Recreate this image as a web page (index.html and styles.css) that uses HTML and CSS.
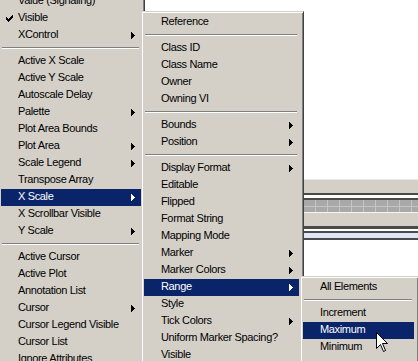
FILE: index.html
```html
<!DOCTYPE html>
<html lang="en">
<head>
    <meta charset="UTF-8">
    <meta name="viewport" content="width=device-width, initial-scale=1.0">
    <title>Property Node Menu</title>
    <link rel="stylesheet" href="styles.css">
</head>
<body>
    <div class="desktop">

        <!-- Pedaço do gráfico atrás dos menus -->
        <div class="scale-strip">
            <div class="strip-face"></div>
            <div class="strip-dark"></div>
            <div class="strip-light"></div>
            <div class="strip-dark"></div>
            <div class="strip-grid"></div>
            <div class="strip-face strip-face-low"></div>
            <div class="strip-dark strip-dark-thick"></div>
            <div class="strip-light strip-light-thin"></div>
            <div class="strip-dark"></div>
            <div class="strip-blue"></div>
            <div class="strip-dark"></div>
        </div>

        <!-- Menu principal -->
        <ul class="menu menu-props">
            <li class="item">Value (Signaling)</li>
            <li class="item checked">
                <svg class="check" width="7" height="7" viewBox="0 0 7 7">
                    <path d="M6 0h1v1h-1z M5 1h2v1h-2z M0 2h1v1h-1z M4 2h3v1h-3z M0 3h2v1h-2z M3 3h3v1h-3z M0 4h5v1h-5z M1 5h3v1h-3z M2 6h1v1h-1z" fill="#000" shape-rendering="crispEdges"/>
                </svg>Visible</li>
            <li class="item sub">XControl</li>
            <li class="sep"></li>
            <li class="item">Active X Scale</li>
            <li class="item">Active Y Scale</li>
            <li class="item">Autoscale Delay</li>
            <li class="item sub">Palette</li>
            <li class="item">Plot Area Bounds</li>
            <li class="item sub">Plot Area</li>
            <li class="item sub">Scale Legend</li>
            <li class="item">Transpose Array</li>
            <li class="item sub active">X Scale</li>
            <li class="item">X Scrollbar Visible</li>
            <li class="item sub">Y Scale</li>
            <li class="sep"></li>
            <li class="item">Active Cursor</li>
            <li class="item">Active Plot</li>
            <li class="item">Annotation List</li>
            <li class="item sub">Cursor</li>
            <li class="item">Cursor Legend Visible</li>
            <li class="item">Cursor List</li>
            <li class="item">Ignore Attributes</li>
        </ul>

        <!-- Submenu X Scale -->
        <ul class="menu menu-scale">
            <li class="item">Reference</li>
            <li class="sep"></li>
            <li class="item">Class ID</li>
            <li class="item">Class Name</li>
            <li class="item">Owner</li>
            <li class="item">Owning VI</li>
            <li class="sep"></li>
            <li class="item sub">Bounds</li>
            <li class="item sub">Position</li>
            <li class="sep"></li>
            <li class="item sub">Display Format</li>
            <li class="item">Editable</li>
            <li class="item">Flipped</li>
            <li class="item">Format String</li>
            <li class="item">Mapping Mode</li>
            <li class="item sub">Marker</li>
            <li class="item sub">Marker Colors</li>
            <li class="item sub active">Range</li>
            <li class="item">Style</li>
            <li class="item sub">Tick Colors</li>
            <li class="item">Uniform Marker Spacing?</li>
            <li class="item">Visible</li>
        </ul>

        <!-- Submenu Range -->
        <ul class="menu menu-range">
            <li class="item">All Elements</li>
            <li class="sep"></li>
            <li class="item">Increment</li>
            <li class="item active">Maximum</li>
            <li class="item">Minimum</li>
        </ul>

        <!-- Ponteiro do mouse -->
        <svg class="pointer" width="13" height="21" viewBox="0 0 13 21">
            <polygon points="0.5,0.5 0.5,16.5 4.5,12.5 7.5,19.5 9.5,18.5 6.5,11.5 11.5,11.5" fill="#fff" stroke="#000" stroke-width="1" stroke-linejoin="miter"/>
        </svg>
    </div>
</body>
</html>
```

FILE: styles.css
```css
body {
    margin: 0;
    background-color: #ffffff;
    font-family: "Liberation Sans", Arial, sans-serif;
    font-size: 11px;
    letter-spacing: -0.35px;
    color: #000000;
}

.desktop {
    position: relative;
    width: 418px;
    height: 361px;
    overflow: hidden;
    background-color: #ffffff;
}

/* Faixa do gráfico (escala / scrollbar) */
.scale-strip {
    margin-left: 303px;
    padding-top: 179px;
}

.strip-face {
    height: 13px;
    background-color: #d4d0c8;
    border-top: 1px solid #ebe9e4;
}

.strip-face-low {
    border-top-color: #f6f5f2;
}

.strip-dark {
    height: 2px;
    background-color: #4a4a4a;
}

.strip-dark-thick {
    height: 3px;
}

.strip-light {
    height: 3px;
    background-color: #ffffff;
}

.strip-light-thin {
    height: 2px;
}

.strip-grid {
    height: 12px;
    background-color: #a9a9a9;
    background-image:
        linear-gradient(90deg, #c6c6c6 1px, transparent 1px),
        linear-gradient(#c6c6c6 1px, transparent 1px);
    background-size: 12px 100%, 100% 6px;
    background-position: 0 0, 0 6px;
    background-repeat: repeat-x, no-repeat;
}

.strip-blue {
    height: 5px;
    background-color: #dde6f6;
}

/* Menus estilo Windows clássico */
.menu {
    position: absolute;
    margin: 0;
    padding: 2px;
    list-style: none;
    box-sizing: border-box;
    background-color: #d4d0c8;
    border: 1px solid;
    border-color: #d4d0c8 #404040 #404040 #d4d0c8;
    box-shadow: inset 1px 1px #ffffff, inset -1px -1px #808080;
}

.menu-props {
    left: -2px;
    top: -10px;
    width: 147px;
    padding-right: 3px;
}

.menu-scale {
    left: 141px;
    top: 11px;
    width: 163px;
    padding-right: 4px;
}

.menu-range {
    left: 300px;
    top: 276px;
    width: 119px;
    padding-right: 4px;
    padding-bottom: 8px;
}

.item {
    display: flex;
    align-items: center;
    box-sizing: border-box;
    height: 17px;
    padding: 0 6px 2px 17px;
    line-height: 15px;
    white-space: nowrap;
}

.item.checked {
    padding-left: 5px;
}

.check {
    flex: none;
    margin: 2px 5px 0 0;
}

.item.sub::after {
    content: "";
    flex: none;
    width: 4px;
    height: 7px;
    margin-left: auto;
    margin-top: 2px;
    background:
        linear-gradient(currentColor, currentColor) 0 0 / 1px 7px no-repeat,
        linear-gradient(currentColor, currentColor) 1px 1px / 1px 5px no-repeat,
        linear-gradient(currentColor, currentColor) 2px 2px / 1px 3px no-repeat,
        linear-gradient(currentColor, currentColor) 3px 3px / 1px 1px no-repeat;
}

.item.active {
    background-color: #0a246a;
    color: #ffffff;
}

.sep {
    height: 0;
    margin: 3px 2px 4px 1px;
    border-top: 1px solid #808080;
    border-bottom: 1px solid #ffffff;
}

.pointer {
    position: absolute;
    left: 376px;
    top: 332px;
}
```
